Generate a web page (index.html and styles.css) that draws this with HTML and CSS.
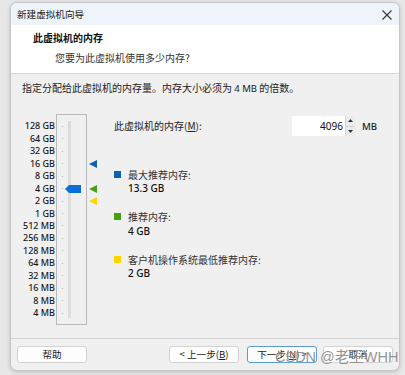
FILE: index.html
```html
<!DOCTYPE html>
<html lang="zh-CN">
<head>
<meta charset="utf-8">
<title>新建虚拟机向导</title>
<link rel="stylesheet" href="styles.css">
</head>
<body>
<div class="dialog">
  <div class="titlebar">
    <span class="title">新建虚拟机向导</span>
    <svg class="close" width="10" height="10" viewBox="0 0 10 10"><path d="M0.5 0.5 L9.5 9.5 M9.5 0.5 L0.5 9.5" stroke="#333" stroke-width="1.1" fill="none"/></svg>
  </div>
  <div class="header">
    <div class="h-title">此虚拟机的内存</div>
    <div class="h-sub">您要为此虚拟机使用多少内存?</div>
  </div>
  <div class="body">
    <p class="desc">指定分配给此虚拟机的内存量。内存大小必须为 <span class="lat">4 MB</span> 的倍数。</p>
    <div class="main">
      <div class="scale">
        <div class="labels">
          <span>128 GB</span><span>64 GB</span><span>32 GB</span><span>16 GB</span>
          <span>8 GB</span><span>4 GB</span><span>2 GB</span><span>1 GB</span>
          <span>512 MB</span><span>256 MB</span><span>128 MB</span><span>64 MB</span>
          <span>32 MB</span><span>16 MB</span><span>8 MB</span><span>4 MB</span>
        </div>
        <div class="slider">
          <i></i><i></i><i></i><i></i><i></i><i></i><i></i><i></i>
          <i></i><i></i><i></i><i></i><i></i><i></i><i></i><i></i>
          <svg class="thumb" width="16" height="8" viewBox="0 0 16 8"><path d="M0 4 L4 0 H16 V8 H4 Z" fill="#0a6fd6"/></svg>
        </div>
        <div class="markers">
          <svg class="mk mk-max" width="8" height="8" viewBox="0 0 8 8"><path d="M0 4 L8 0 V8 Z" fill="#0b63b4"/></svg>
          <svg class="mk mk-rec" width="8" height="8" viewBox="0 0 8 8"><path d="M0 4 L8 0 V8 Z" fill="#46a010"/></svg>
          <svg class="mk mk-min" width="8" height="8" viewBox="0 0 8 8"><path d="M0 4 L8 0 V8 Z" fill="#ffd500"/></svg>
        </div>
      </div>
      <div class="right">
        <div class="mem-row">
          <span class="mem-label">此虚拟机的内存(<u>M</u>):</span>
          <div class="spin">
            <span class="spin-val">4096</span>
            <div class="spin-btns">
              <span class="sb"><svg width="5" height="3" viewBox="0 0 5 3"><path d="M0 3 L2.5 0 L5 3 Z" fill="#333"/></svg></span>
              <span class="sb"><svg width="5" height="3" viewBox="0 0 5 3"><path d="M0 0 L2.5 3 L5 0 Z" fill="#333"/></svg></span>
            </div>
          </div>
          <span class="unit">MB</span>
        </div>
        <div class="legend">
          <div class="item">
            <div class="item-head"><span class="sq sq-blue"></span><span>最大推荐内存:</span></div>
            <div class="item-val">13.3 GB</div>
          </div>
          <div class="item">
            <div class="item-head"><span class="sq sq-green"></span><span>推荐内存:</span></div>
            <div class="item-val">4 GB</div>
          </div>
          <div class="item">
            <div class="item-head"><span class="sq sq-yellow"></span><span>客户机操作系统最低推荐内存:</span></div>
            <div class="item-val">2 GB</div>
          </div>
        </div>
      </div>
    </div>
  </div>
  <div class="footer">
    <button class="btn">帮助</button>
    <div class="btn-group">
      <button class="btn">&lt; 上一步(<u>B</u>)</button>
      <button class="btn btn-primary">下一步(<u>N</u>) &gt;</button>
      <button class="btn btn-last">取消</button>
    </div>
  </div>
  <div class="watermark">CSDN @老王WHH</div>
</div>
</body>
</html>
```

FILE: styles.css
```css
* { box-sizing: border-box; }
html, body { margin: 0; padding: 0; }
body {
  width: 405px;
  height: 375px;
  overflow: hidden;
  background: #e7e7e7;
  font-family: "Noto Sans CJK SC", "Noto Sans", sans-serif;
  color: #1a1a1a;
}
.dialog {
  position: relative;
  margin: 2px 0 0 10px;
  width: 390px;
  height: 369px;
  border: 1px solid #c6c6c6;
  border-radius: 7px;
  overflow: hidden;
  background: #f0f0f0;
  display: flex;
  flex-direction: column;
  box-shadow: 0 1px 4px rgba(0,0,0,0.18);
}
.titlebar {
  height: 22px;
  flex: none;
  background: #eef4f9;
  display: flex;
  align-items: center;
  justify-content: space-between;
  padding: 0 7px 0 6px;
}
.title { font-size: 9.6px; line-height: 12px; color: #222; }
.close { display: block; margin-top: 1px; }
.header {
  height: 49px;
  flex: none;
  background: #fff;
  border-bottom: 1px solid #d6d6d6;
  padding: 6px 0 0 22px;
}
.h-title { font-size: 10px; line-height: 14px; font-weight: 700; color: #111; }
.h-sub { font-size: 10px; line-height: 14px; margin: 6px 0 0 22px; color: #333; }
.body {
  flex: 1;
  padding: 7px 11px 0 11px;
  border-bottom: 1px solid #d4d4d4;
}
.desc { margin: 0; font-size: 10px; line-height: 14px; color: #222; }
.lat { font-family: "Noto Sans", sans-serif; font-size: 9.5px; }
.main { display: flex; margin-top: 18px; }
.scale { display: flex; flex: none; }
.labels {
  width: 33px;
  padding-top: 6px;
  display: grid;
  grid-template-rows: repeat(16, 12.47px);
  justify-items: end;
  align-items: center;
  font-family: "Noto Sans", sans-serif;
  font-size: 9px;
  font-weight: 500;
  color: #1a1a1a;
}
.labels span { line-height: 10px; white-space: nowrap; }
.slider {
  margin-left: 1px;
  width: 31px;
  height: 211px;
  border: 1px solid #b9b9b9;
  padding-top: 5px;
  display: grid;
  grid-template-columns: 4px 16px;
  grid-template-rows: repeat(16, 12.47px);
  background: linear-gradient(#dcdcdc, #dcdcdc) no-repeat 11px 6px / 3px 197px;
  padding-left: 3px;
}
.slider i {
  grid-column: 1;
  width: 1px;
  height: 1px;
  background: #b8b8b8;
  align-self: center;
  justify-self: center;
}
.thumb { grid-column: 2; grid-row: 6; align-self: center; display: block; margin-left: 1px; }
.markers {
  width: 14px;
  padding: 6px 0 0 2px;
  height: 211px;
  display: grid;
  grid-template-rows: repeat(16, 12.47px);
  align-items: center;
}
.mk { display: block; }
.mk-max { grid-row: 4; }
.mk-rec { grid-row: 6; }
.mk-min { grid-row: 7; }
.right { margin-left: 13px; flex: 1; }
.mem-row { display: flex; align-items: center; height: 20px; margin-top: 2px; }
.mem-label { font-size: 10px; line-height: 14px; width: 178px; color: #222; }
.mem-label u, .btn u { text-decoration: underline; text-underline-offset: 1px; }
.spin { display: flex; height: 20px; width: 63px; background: #fff; }
.spin-val {
  flex: 1;
  text-align: right;
  font-family: "Noto Sans", sans-serif;
  font-size: 10px;
  line-height: 20px;
  padding-right: 2px;
  color: #111;
}
.spin-btns { width: 10px; display: flex; flex-direction: column; border-left: 1px solid #d4d4d4; }
.sb { flex: 1; display: flex; align-items: center; justify-content: center; background: #ececec; }
.sb + .sb { border-top: 1px solid #d4d4d4; }
.sb svg { display: block; }
.unit { margin-left: 7px; font-family: "Noto Sans", sans-serif; font-size: 9.6px; font-weight: 500; color: #222; }
.legend { margin-top: 31px; display: flex; flex-direction: column; gap: 14.5px; }
.item-head { display: flex; align-items: center; height: 14px; font-size: 10px; color: #333; }
.sq { width: 7px; height: 7px; margin-right: 7px; flex: none; }
.sq-blue { background: #0b63b4; }
.sq-green { background: #46a010; }
.sq-yellow { background: #ffd500; }
.item-val {
  height: 14px;
  line-height: 14px;
  padding-left: 14px;
  font-family: "Noto Sans", sans-serif;
  font-size: 10px;
  font-weight: 500;
  color: #111;
}
.footer {
  height: 31px;
  flex: none;
  display: flex;
  justify-content: space-between;
  padding: 7px 6px 0 6px;
}
.btn-group { display: flex; gap: 8px; }
.btn {
  width: 70px;
  height: 17px;
  padding: 0;
  background: #fdfdfd;
  border: 1px solid #d3d3d3;
  border-radius: 3px;
  font-family: "Noto Sans CJK SC", "Noto Sans", sans-serif;
  font-size: 9.6px;
  line-height: 15px;
  color: #222;
}
.btn-primary { border-color: #5b9bd5; }
.btn-group .btn-last { margin-left: -2px; }
.watermark {
  position: absolute;
  left: 264px;
  top: 345px;
  font-family: "Liberation Sans", "Noto Sans CJK SC", sans-serif;
  font-size: 14.5px;
  line-height: 18px;
  color: rgba(110,110,110,0.75);
  text-shadow: 0 0 1px rgba(255,255,255,0.8);
  white-space: nowrap;
}
```
